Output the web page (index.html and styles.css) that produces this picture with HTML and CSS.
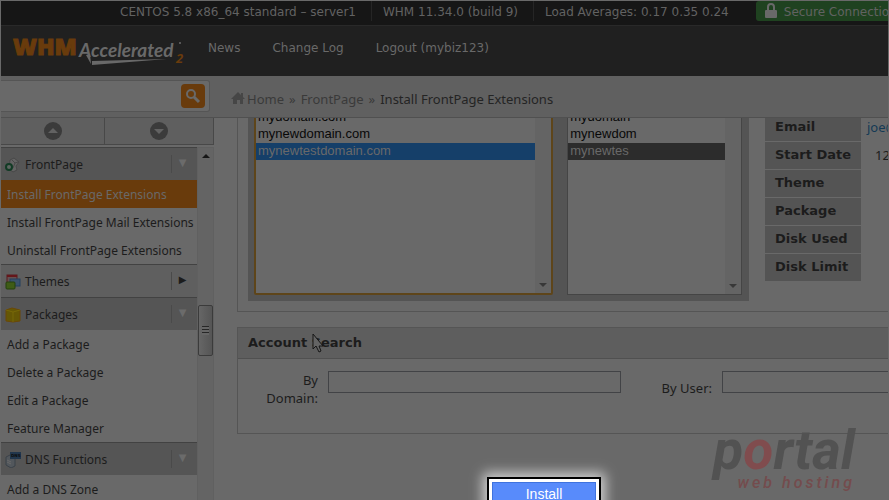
FILE: index.html
```html
<!DOCTYPE html>
<html lang="en">
  <head>
    <meta charset="utf-8">
    <title>Install FrontPage Extensions</title>
    <link rel="stylesheet" href="styles.css">
  </head>
  <body>
    <div class="topbar">
      <span class="stat">CENTOS 5.8 x86_64 standard – server1</span>
      <span class="stat">WHM 11.34.0 (build 9)</span>
      <span class="stat">Load Averages: 0.17 0.35 0.24</span>
      <span class="secure">
        <svg width="12" height="16" viewBox="0 0 12 16"><path d="M3 8V4a3 3 0 0 1 6 0v4" fill="none" stroke="#696969" stroke-width="2"/><rect y="7" width="12" height="8" rx="1" fill="#696969"/></svg>
        Secure Connection
      </span>
    </div>

    <header class="header">
      <svg class="logo" width="184" height="50" viewBox="0 0 184 50">
        <text class="logo-whm" x="12" y="29">WHM</text>
        <text class="logo-name" x="78" y="31">Accelerated</text>
        <path d="M85 29l5 9-1-10z" fill="#696969"/>
        <path d="M91 35l75-2-75 6z" fill="#696969"/>
        <circle cx="179" cy="17" r="1" fill="#696969"/>
        <text class="logo-two" x="175" y="37">2</text>
      </svg>
      <nav class="nav">
        <a href="#">News</a>
        <a href="#">Change Log</a>
        <a href="#">Logout (mybiz123)</a>
      </nav>
    </header>

    <div class="toolbar">
      <form class="search">
        <input type="text" aria-label="Search">
        <button type="button" aria-label="Go">
          <svg width="24" height="24" viewBox="0 0 24 24"><circle cx="10" cy="10" r="4" fill="none" stroke="#696969" stroke-width="2"/><path d="M13 13l5 5" stroke="#696969" stroke-width="3"/></svg>
        </button>
      </form>
      <div class="breadcrumb">
        <svg width="14" height="13" viewBox="0 0 14 13"><path d="M7 0L0 7h2v5h4V8h3v4h3V7h2l-2-2V1h-2v2z" fill="#464646"/></svg>
        <a href="#">Home</a>
        <span>»</span>
        <a href="#">FrontPage</a>
        <span>»</span>
        <span class="current">Install FrontPage Extensions</span>
      </div>
    </div>

    <div class="page">
      <aside class="sidebar">
        <div class="jump">
          <button type="button" aria-label="Previous"><svg width="18" height="18" viewBox="0 0 18 18"><circle cx="9" cy="9" r="9" fill="#3b3b3b"/><path d="M9 6l5 5H4z" fill="#626262"/></svg></button>
          <button type="button" aria-label="Next"><svg width="18" height="18" viewBox="0 0 18 18"><circle cx="9" cy="9" r="9" fill="#3b3b3b"/><path d="M9 12l5-5H4z" fill="#626262"/></svg></button>
        </div>
        <div class="menu-wrap">
          <div class="menu">
            <h3>
              <svg width="16" height="16" viewBox="0 0 16 16"><path d="M5 3l4-2 5 4-3 4 1 4-4 2-4-3z" fill="#636363" stroke="#484848"/><path d="M7 3l3 3 3-1M10 6l-2 5" fill="none" stroke="#484848"/><circle cx="4" cy="10" r="3" fill="#5d6560" stroke="#123b25" stroke-width="2"/></svg>
              <span>FrontPage</span>
              <i>▼</i>
            </h3>
            <ul>
              <li class="active"><a href="#">Install FrontPage Extensions</a></li>
              <li><a href="#">Install FrontPage Mail Extensions</a></li>
              <li><a href="#">Uninstall FrontPage Extensions</a></li>
            </ul>
            <h3 class="closed">
              <svg width="16" height="16" viewBox="0 0 16 16"><rect x="2" y="1" width="10" height="9" fill="#655050" stroke="#581b20"/><path d="M2 2h10" stroke="#65161a" stroke-width="2"/><rect x="5" y="5" width="10" height="7" fill="#3a526b" stroke="#24405f"/><rect x="1" y="8" width="9" height="7" rx="1" fill="#3f5c16" stroke="#24400d"/></svg>
              <span>Themes</span>
              <i>▶</i>
            </h3>
            <h3>
              <svg width="16" height="16" viewBox="0 0 16 16"><path d="M1 3l6-2 8 2v11l-7 1-7-1z" fill="#655705" stroke="#6a4806"/><path d="M1 3l7 2 7-2M8 5v10" fill="none" stroke="#776808"/></svg>
              <span>Packages</span>
              <i>▼</i>
            </h3>
            <ul>
              <li><a href="#">Add a Package</a></li>
              <li><a href="#">Delete a Package</a></li>
              <li><a href="#">Edit a Package</a></li>
              <li><a href="#">Feature Manager</a></li>
            </ul>
            <h3>
              <svg width="16" height="16" viewBox="0 0 16 16"><path d="M1 5l4-2 5 3v8l-4 2-5-3z" fill="#52575c" stroke="#3b4249"/><path d="M2 8l4 2M2 10l4 2" stroke="#696969"/><path d="M5 0h11v7H5z" fill="#21364c"/><text class="dns" x="6" y="5">DNS</text></svg>
              <span>DNS Functions</span>
              <i>▼</i>
            </h3>
            <ul>
              <li><a href="#">Add a DNS Zone</a></li>
            </ul>
          </div>
          <div class="scrollbar">
            <svg width="8" height="5" viewBox="0 0 8 5"><path d="M4 0l4 4H0z" fill="#161616"/></svg>
            <div class="thumb"></div>
          </div>
        </div>
      </aside>

      <main class="main">
        <section class="panel accounts">
          <div class="lists">
            <div class="listbox domains">
              <select multiple aria-label="Domain">
                <option>mydomain.com</option>
                <option>mynewdomain.com</option>
                <option selected>mynewtestdomain.com</option>
              </select>
              <div class="track"><svg width="8" height="4" viewBox="0 0 8 4"><path d="M0 0h8L4 4z" fill="#383838"/></svg></div>
            </div>
            <div class="listbox users">
              <select multiple aria-label="User">
                <option>mydomain</option>
                <option>mynewdom</option>
                <option selected>mynewtes</option>
              </select>
              <div class="track"><svg width="8" height="4" viewBox="0 0 8 4"><path d="M0 0h8L4 4z" fill="#383838"/></svg></div>
            </div>
          </div>
          <table class="info">
            <tr><th>Email</th><td><a href="#">joe@mynewtestdomain.com</a></td></tr>
            <tr><th>Start Date</th><td class="date">12 Nov 13</td></tr>
            <tr><th>Theme</th><td></td></tr>
            <tr><th>Package</th><td></td></tr>
            <tr><th>Disk Used</th><td></td></tr>
            <tr><th>Disk Limit</th><td></td></tr>
          </table>
        </section>

        <section class="panel">
          <h2>Account Search</h2>
          <form class="fields">
            <label for="by-domain">By Domain:</label>
            <input type="text" id="by-domain">
            <label for="by-user" class="user-label">By User:</label>
            <input type="text" id="by-user">
          </form>
          <svg class="cursor" width="14" height="20" viewBox="0 0 14 20"><path d="M1 1v15l3-3 3 6 2-1-2-5h4z" fill="#646464" stroke="#161616"/></svg>
        </section>

        <div class="actions">
          <button type="button" class="install">Install</button>
        </div>
      </main>
    </div>

    <div class="watermark">
      <div class="brand">p<span>o</span>rtal</div>
      <div class="tagline">web hosting</div>
    </div>
  </body>
</html>
```

FILE: styles.css
```css
/* Global styles */
* {
  box-sizing: border-box;
}

body {
  background: #696969;
  border: 1px solid #696969;
  border-bottom: none;
  color: #1c1c1c;
  display: flex;
  flex-direction: column;
  font-family: "Noto Sans", "Open Sans", sans-serif;
  font-size: 13px;
  height: 100vh;
  line-height: 18px;
  margin: 0;
  overflow: hidden;
  position: relative;
}

a {
  color: inherit;
  text-decoration: none;
}

button {
  border: none;
  padding: 0;
}

svg {
  display: block;
  flex: none;
}

/* Top bar */
.topbar {
  background: #161616;
  border-bottom: 1px solid #292929;
  color: #626262;
  display: flex;
  flex: none;
  font: 12px/23px "DejaVu Sans", sans-serif;
  height: 25px;
  padding-left: 108px;
  white-space: nowrap;
}

.stat {
  border-right: 1px solid #252525;
  height: 20px;
  padding: 0 15px 0 11px;
}

.stat:nth-child(3) {
  border: none;
  margin-right: 12px;
}

.secure {
  background: #1f4220;
  border-radius: 3px 0 0 3px;
  display: flex;
  flex: 1 0 0;
  gap: 7px;
  height: 20px;
  padding-left: 9px;
}

.secure svg {
  margin-top: 2px;
}

/* Header */
.header {
  align-items: center;
  background: #202020;
  display: flex;
  flex: none;
  height: 50px;
}

.logo-whm {
  fill: #693b0c;
  font: 800 23px "Open Sans", sans-serif;
  stroke: #693b0c;
}

.logo-name {
  fill: #696969;
  font: italic 700 19px Lato, sans-serif;
}

.logo-two {
  fill: #693b0c;
  font: italic 700 13px "Open Sans", sans-serif;
}

.nav {
  color: #696969;
  display: flex;
  font: 12px/18px "DejaVu Sans", sans-serif;
  gap: 32px;
  padding: 0 0 7px 23px;
}

/* Search and breadcrumb */
.toolbar {
  align-items: center;
  background: #606060;
  border-bottom: 1px solid #505050;
  display: flex;
  flex: none;
  height: 42px;
}

.search {
  background: #696969;
  border: 1px solid #555;
  border-left: none;
  border-radius: 0 3px 3px 0;
  display: flex;
  flex: none;
  height: 32px;
  margin-bottom: 2px;
  padding: 3px 4px;
  width: 209px;
}

.search input {
  background: none;
  border: none;
  flex: 1;
  min-width: 0;
}

.search button {
  background: #693b0c;
  border-radius: 4px;
  height: 24px;
  width: 24px;
}

.breadcrumb {
  color: #3a3a3a;
  display: flex;
  gap: 5px;
  padding: 5px 0 0 21px;
}

.breadcrumb svg {
  margin: 2px -3px 0 0;
}

.breadcrumb .current {
  color: #242424;
}

.page {
  display: flex;
  flex: 1;
  min-height: 0;
}

/* Sidebar */
.sidebar {
  display: flex;
  flex: none;
  flex-direction: column;
  width: 213px;
}

.jump {
  background: #5f5f5f;
  border-bottom: 1px solid #484848;
  display: flex;
  flex: none;
  height: 27px;
  margin-bottom: 2px;
}

.jump button {
  align-items: center;
  background: none;
  border-right: 1px solid #484848;
  display: flex;
  flex: 109;
  justify-content: center;
}

.jump button:first-child {
  flex: 104;
}

.menu-wrap {
  display: flex;
  flex: 1;
  min-height: 0;
}

.menu {
  flex: 1;
  font-size: 12px;
}

.menu h3 {
  align-items: center;
  background: #555;
  border-top: 1px solid #424242;
  display: flex;
  font-size: 12px;
  font-weight: normal;
  gap: 4px;
  height: 33px;
  margin: 0;
  padding: 2px 0 0 4px;
}

.menu h3.closed {
  background: #5f5f5f;
}

.menu h3 span {
  flex: 1;
}

.menu i {
  border-left: 1px solid #4a4a4a;
  color: #6b6b6b;
  font: 10px/16px "DejaVu Sans", sans-serif;
  height: 18px;
  margin-bottom: 2px;
  padding-right: 4px;
  text-align: center;
  width: 26px;
}

.menu .closed i {
  color: #1c1c1c;
}

.menu ul {
  list-style: none;
  margin: 0;
  padding: 0;
}

.menu li {
  line-height: 30px;
  height: 28px;
  padding-left: 6px;
  white-space: nowrap;
}

.menu .active {
  background: #693b0c;
  color: #696969;
}

.dns {
  fill: #0c0c0c;
  font: 700 4px "DejaVu Sans", sans-serif;
}

.scrollbar {
  align-items: center;
  background: #646464;
  border: 1px solid #606060;
  border-bottom: none;
  display: flex;
  flex-direction: column;
  padding-top: 6px;
  width: 17px;
}

.thumb {
  background: repeating-linear-gradient(#272727 0 1px, #666 1px 3px) center / 7px 9px no-repeat, linear-gradient(90deg, #666, #555);
  border: 1px solid #3b3b3b;
  border-radius: 2px;
  height: 51px;
  margin-top: 146px;
  width: 15px;
}

/* Main content, scrolled down under the toolbar */
.main {
  flex: 1;
  min-width: 0;
  overflow: hidden;
  padding-left: 23px;
}

.panel {
  border: 1px solid #555;
  border-right: none;
  margin-bottom: 15px;
  position: relative;
}

.accounts {
  display: flex;
  gap: 16px;
  margin-top: -19px;
  padding: 0 0 10px 10px;
}

.lists {
  background: #545454;
  display: flex;
  flex: 1;
  gap: 14px;
  padding: 7px 7px 6px 6px;
}

.listbox {
  border: 1px solid #454545;
  display: flex;
  height: 188px;
  min-width: 0;
}

.domains {
  border: 2px solid #5e451a;
  border-radius: 2px;
  flex: 299;
}

.users {
  flex: 175;
}

.listbox select {
  background: #696969;
  border: none;
  border-radius: 0;
  flex: 1;
  font: 13px "Liberation Sans", Arial, sans-serif;
  min-width: 0;
  outline: none;
  overflow: hidden;
  padding: 0;
  scrollbar-width: none;
}

.listbox.users select {
  padding-top: 1px;
}

.listbox option {
  color: #080808;
  height: 17px;
  line-height: 17px;
  min-height: 17px;
  padding: 0 2px;
}

.domains option:checked {
  background: linear-gradient(#153f69, #153f69);
  color: #696969;
}

.users option:checked {
  background: linear-gradient(#2c2c2c, #2c2c2c);
  color: #696969;
}

.track {
  align-items: flex-end;
  background: #646464;
  display: flex;
  justify-content: center;
  padding-bottom: 6px;
  width: 16px;
}

.info {
  align-self: flex-start;
  border-collapse: collapse;
  flex: none;
  margin-top: 13px;
  table-layout: fixed;
  width: 123px;
}

.info th {
  background: #545454;
  border-bottom: 1px solid #696969;
  font: bold 13px/18px "DejaVu Sans", sans-serif;
  height: 28px;
  padding: 0 0 0 10px;
  text-align: left;
  white-space: nowrap;
  width: 96px;
}

.info td {
  overflow: hidden;
  padding: 0 0 0 6px;
  white-space: nowrap;
}

.info td a {
  color: #143a55;
}

.info .date {
  padding-left: 14px;
}

.panel h2 {
  background: #5e5e5e;
  border-bottom: 1px solid #505050;
  font: bold 13px/30px "DejaVu Sans", sans-serif;
  margin: 0;
  padding-left: 10px;
}

.fields {
  align-items: start;
  display: grid;
  gap: 10px;
  grid-template-columns: 80px 293px 81px 1fr;
  padding: 12px 0 26px;
}

.fields label {
  padding-left: 20px;
  text-align: right;
}

.fields .user-label {
  padding-top: 8px;
  white-space: nowrap;
}

.fields input {
  background: #696969;
  border: 1px solid #424346;
  height: 22px;
  min-width: 0;
}

.fields input:last-child {
  border-right: none;
}

.cursor {
  left: 74px;
  position: absolute;
  top: 5px;
}

.actions {
  display: flex;
  justify-content: center;
  padding: 28px 37px 0 0;
}

.install {
  background: #588bfb;
  border: 2px solid #000;
  box-shadow: inset 0 0 0 3px #fff, inset 0 0 0 4px #3f73de, 0 0 12px 4px rgba(255, 255, 255, 0.7);
  color: #fff;
  flex: none;
  font: 14px/28px "Liberation Sans", Arial, sans-serif;
  height: 34px;
  width: 114px;
}

/* Hosting company mark over the bottom corner */
.watermark {
  bottom: 8px;
  position: absolute;
  right: 33px;
  text-align: right;
}

.brand {
  color: #525252;
  font: italic 700 55px/48px Roboto, sans-serif;
}

.brand span {
  color: #804c4e;
}

.tagline {
  color: #744c4d;
  font: italic 500 16px/18px Roboto, sans-serif;
  letter-spacing: 3px;
}
```
